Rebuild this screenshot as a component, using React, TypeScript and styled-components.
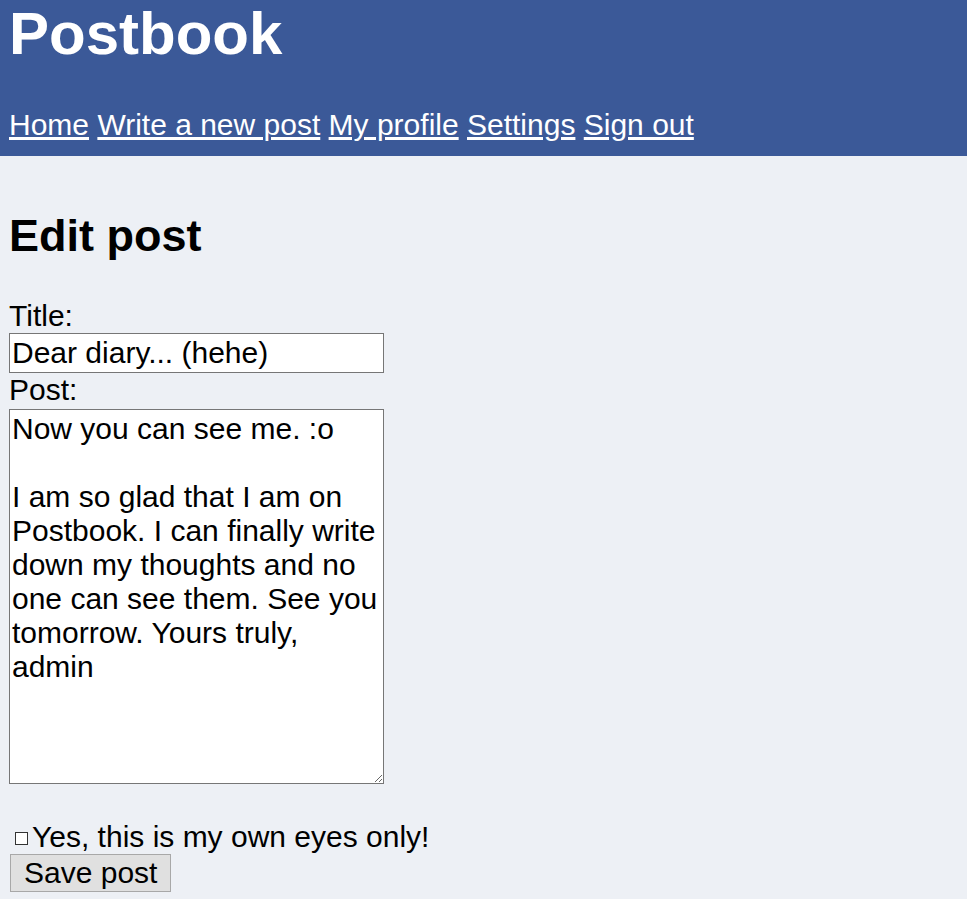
import React from "react";
import styled, { createGlobalStyle } from "styled-components";

const GlobalStyle = createGlobalStyle`
  html, body {
    margin: 0;
    padding: 0;
    background: #edf0f5;
  }

  body {
    font-family: "Liberation Sans", Arial, sans-serif;
    font-size: 30px;
    color: #000;
  }
`;

const Header = styled.header`
  background: #3b5998;
  color: #fff;
  padding: 0 9px 14px;
`;

const SiteTitle = styled.h1`
  font-size: 60px;
  font-weight: bold;
  line-height: 69px;
  margin: -1px 0 40px;
`;

const Nav = styled.nav`
  line-height: 34px;
  white-space: nowrap;
`;

const NavLink = styled.a`
  color: #fff;
  text-decoration: underline;
`;

const Main = styled.main`
  padding: 54px 9px 0;
`;

const PageTitle = styled.h2`
  font-size: 45px;
  font-weight: bold;
  line-height: 52px;
  margin: 0 0 37px;
`;

const Form = styled.form``;

const Label = styled.label`
  display: block;
  line-height: 34px;
`;

const TextInput = styled.input`
  display: block;
  box-sizing: border-box;
  width: 375px;
  height: 40px;
  margin: 0;
  padding: 1px 2px;
  border: 1px solid #767676;
  background: #fff;
  font: inherit;
  color: #000;
`;

const PostArea = styled.textarea`
  display: block;
  box-sizing: border-box;
  width: 375px;
  height: 375px;
  margin: 2px 0 36px;
  padding: 2px;
  border: 1px solid #767676;
  background: #fff;
  font: inherit;
  line-height: 34px;
  color: #000;
`;

const CheckRow = styled.label`
  display: block;
  line-height: 34px;
`;

const Check = styled.input`
  appearance: none;
  box-sizing: border-box;
  width: 13px;
  height: 13px;
  margin: 3px 4px 2px 6px;
  border: 1px solid #333;
  background: #fff;
  vertical-align: baseline;

  &:checked {
    background: #333;
  }
`;

const SaveButton = styled.button`
  display: block;
  margin: 0 0 0 1px;
  padding: 1px 13px;
  height: 38px;
  font: inherit;
  line-height: 34px;
  color: #000;
  background: #e0e0e0;
  border: 1px solid #a8a8a8;
  border-radius: 0;
`;

const links = ["Home", "Write a new post", "My profile", "Settings", "Sign out"];

const postText =
  "Now you can see me. :o\n\nI am so glad that I am on Postbook. I can finally write down my thoughts and no one can see them. See you tomorrow. Yours truly, admin";

const App: React.FC = () => {
  return (
    <>
      <GlobalStyle />
      <Header>
        <SiteTitle>Postbook</SiteTitle>
        <Nav>
          {links.map((l, i) => (
            <React.Fragment key={l}>
              {i > 0 && " "}
              <NavLink href="#">{l}</NavLink>
            </React.Fragment>
          ))}
        </Nav>
      </Header>
      <Main>
        <PageTitle>Edit post</PageTitle>
        <Form onSubmit={(e) => e.preventDefault()}>
          <Label htmlFor="title">Title:</Label>
          <TextInput id="title" type="text" defaultValue="Dear diary... (hehe)" />
          <Label htmlFor="post">Post:</Label>
          <PostArea id="post" defaultValue={postText} />
          <CheckRow>
            <Check type="checkbox" />
            Yes, this is my own eyes only!
          </CheckRow>
          <SaveButton type="submit">Save post</SaveButton>
        </Form>
      </Main>
    </>
  );
};

export default App;
